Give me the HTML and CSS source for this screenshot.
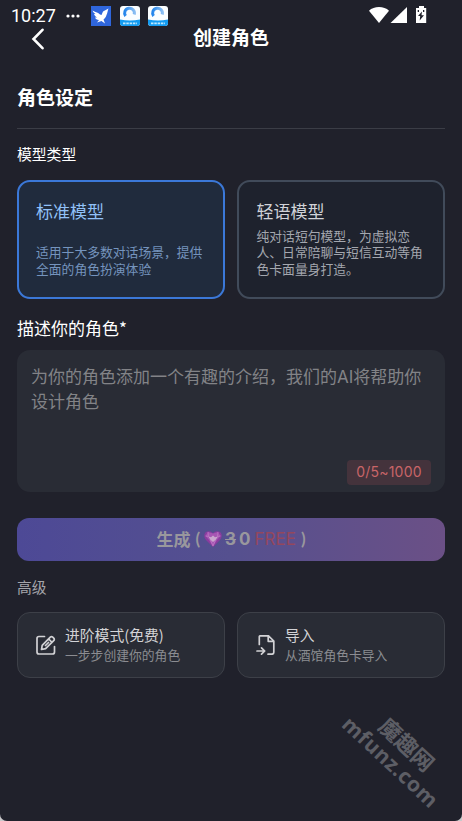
FILE: index.html
```html
<!DOCTYPE html>
<html lang="zh-CN">
<head>
<meta charset="utf-8">
<title>创建角色</title>
<link rel="stylesheet" href="styles.css">
</head>
<body>
<div class="screen">
  <div class="status">
    <span class="time">10:27</span>
    <svg class="dots" width="14" height="4" viewBox="0 0 14 4"><g fill="#fff"><circle cx="2" cy="2" r="1.6"/><circle cx="7" cy="2" r="1.6"/><circle cx="12" cy="2" r="1.6"/></g></svg>
    <svg class="bird" width="20" height="20" viewBox="0 0 20 20"><path fill="#2f66dc" d="M0 0h20v20H0z"/><path fill="#fff" d="M1.500 4.500C4 6 6.500 6 9 8.500L10.500 9 12 5.500 17.500 2.500C16.500 5 16.500 7 15.500 9C15 11.500 13.500 12.500 12.500 13.500L14 17.500 10.500 15 6 16.500 8 14C6 14 4.500 13 4 11.500L6 11.500C4.500 10.500 3.500 9.500 3 8L4.500 8C3 7 2 6 1.500 4.500Z"/></svg>
    <svg class="app" width="20" height="20" viewBox="0 0 20 20"><defs><clipPath id="tile"><rect width="20" height="20" rx="3"/></clipPath><linearGradient id="ring"><stop stop-color="#2586ec"/><stop offset="1" stop-color="#8abdf2"/></linearGradient></defs><g id="app-icon" clip-path="url(#tile)"><path fill="#fafdff" d="M0 0h20v20H0z"/><path d="M5.600 10A4.900 4.900 0 1 1 14.200 8.500" fill="none" stroke="url(#ring)" stroke-width="3"/><path fill="#139cf2" d="M0 13.500Q10 15.500 20 13.500V20H0z"/><path d="M3 17.300h14" stroke="#bde8ff" stroke-width="1.800" stroke-dasharray="2.500 .8"/></g></svg>
    <svg class="app" width="20" height="20" viewBox="0 0 20 20"><use href="#app-icon"/></svg>
    <svg class="signals" width="58" height="18" viewBox="0 0 58 18"><path fill="#fff" d="M0 4.700C5-.2 15-.2 20 4.700L10 17z"/><path fill="#fff" d="M38 1v16H21.500z"/><path fill="#fff" d="M50 0h5v2h2.200v15H47V2h3z"/><path fill="#20212b" d="M53 5.500l-4 4.600h2.200L50.700 14.500l4.300-5.200h-2.500zM48.700 4h1.300v2h-1.300zM54 4h1.300v2H54z"/></svg>
  </div>
  <header class="header">
    <svg class="back" width="14" height="22" viewBox="0 0 14 22"><path d="M11.500 1.800L2.500 11l9 9.200" fill="none" stroke="#fff" stroke-width="2.600" stroke-linecap="round"/></svg>
    <h1>创建角色</h1>
  </header>
  <main>
    <h2>角色设定</h2>
    <h3>模型类型</h3>
    <div class="models">
      <div class="model selected"><strong>标准模型</strong><p>适用于大多数对话场景，提供<br>全面的角色扮演体验</p></div>
      <div class="model"><strong>轻语模型</strong><p>纯对话短句模型，为虚拟恋<br>人、日常陪聊与短信互动等角<br>色卡面量身打造。</p></div>
    </div>
    <h4>描述你的角色*</h4>
    <div class="prompt">
      <p>为你的角色添加一个有趣的介绍，我们的<span class="latin">AI</span>将帮助你<br>设计角色</p>
      <span class="count">0/5~1000</span>
    </div>
    <div class="generate">
      <span>生成</span><span class="paren open">(</span>
      <svg class="gem" width="20" height="18" viewBox="0 0 20 18"><path fill="#8a3c9f" d="M10 3.500C11.500 1 15 .8 17 2C19.500 4 19 7.500 17 10L10 17 3 10C1 7.500.5 4 3 2C5 .8 8.500 1 10 3.500Z"/><path fill="#a656b3" d="M10 3.500L15 2 17.500 6 14 10 10 16.500 6 10 2.500 6 5 2z"/><path fill="#c9a6ce" d="M5.500 6.500L8 7.200 10 5.500l2 1.700 3-.7-2.500 3.500L10 12 7.500 10z"/><path d="M2.500 6l3 .5L5 2M17.500 6l-3 .5L15 2M7.500 10L10 16l2.500-6" fill="none" stroke="#c07bc5" stroke-width=".7"/></svg>
      <span class="old">3</span><span class="zero">0</span><span class="free">FREE</span><span class="paren">)</span>
    </div>
    <h5>高级</h5>
    <div class="actions">
      <div class="action">
        <svg width="20" height="20" viewBox="0 0 20 20" fill="none" stroke="#d2d2d5" stroke-width="1.700" stroke-linecap="round" stroke-linejoin="round"><path d="M8.500 1.500H3Q1 1.500 1 3.500V17Q1 19 3 19H16.500Q18.500 19 18.500 17V11.500"/><path d="M5.500 14.500l.7-4.200L14.300 2.200q1.200-1.200 2.400 0l1 1q1.200 1.200 0 2.400L9.600 13.700zM12.700 4l3.300 3.300M9.500 10.500l3-3"/></svg>
        <div><b>进阶模式(免费)</b><small>一步步创建你的角色</small></div>
      </div>
      <div class="action">
        <svg width="20" height="20" viewBox="0 0 20 20" fill="none" stroke="#d2d2d5" stroke-width="1.700" stroke-linecap="round" stroke-linejoin="round"><path d="M3.300 9.500V1.800Q3.300.8 4.300.8H12.500L17.800 6V17.200Q17.800 19.200 15.800 19.200H12M12.200 1V6.300H17.500M1 16h7M5.500 12.800L8.700 16l-3.200 3.200"/></svg>
        <div><b>导入</b><small>从酒馆角色卡导入</small></div>
      </div>
    </div>
  </main>
  <div class="watermark"><span class="brand">魔趣网</span><span class="site">mfunz.com</span></div>
</div>
</body>
</html>
```
FILE: styles.css
```css
* { box-sizing: border-box; }
body { margin: 0; background: #c9c9cb; font-family: "Noto Sans CJK SC", sans-serif; }
h1, h2, h3, h4, h5, p { margin: 0; }
svg { display: block; flex: none; }
.screen { position: relative; height: 821px; background: #20212b; border-radius: 0 0 7px 7px; overflow: hidden; color: #fff; }
.status { display: flex; align-items: center; height: 26px; padding: 6px 35px 0 11px; }
.time { width: 46px; font: 400 18px/20px Roboto, sans-serif; }
.dots { margin-left: 9px; }
.bird { margin-left: 11px; }
.app { margin-left: 9px; }
.app + .app { margin-left: 8px; }
.signals { margin-left: auto; margin-top: -2px; }
.header { display: flex; align-items: center; height: 26px; }
.back { margin-left: 31px; }
.header h1 { flex: 1; margin: -4px 45px 0 0; text-align: center; font-size: 19px; line-height: 26px; font-weight: 700; }
main { padding: 29px 17px 0; }
h2 { height: 48px; border-bottom: 1px solid #3b3d46; font-size: 19px; line-height: 32px; font-weight: 700; }
h3 { margin-top: 13px; font-size: 14.800px; line-height: 24px; font-weight: 400; }
.models, .actions { display: grid; grid-template-columns: 1fr 1fr; gap: 12px; }
.model { display: flex; flex-direction: column; justify-content: space-between; height: 119px; margin-top: 14px; padding: 16px 0 19px 17.500px; border: 2px solid #414b5a; border-radius: 13px; background: #1e222d; color: #d1d3d8; }
.model strong { font-size: 17px; line-height: 26px; font-weight: 400; }
.model p { font-size: 12.800px; line-height: 16.800px; color: #a4a7af; white-space: nowrap; }
.selected { padding-left: 17px; border-color: #3b78d8; background: #202b3d; color: #91c1f8; }
.selected p { color: #7594be; }
h4 { margin-top: 16px; font-size: 17px; line-height: 26px; font-weight: 400; }
.prompt { display: flex; flex-direction: column; height: 142px; margin-top: 9px; padding: 13px 14px 14px; border-radius: 13px; background: #292c35; }
.prompt p { font-size: 17px; line-height: 25px; color: #828387; white-space: nowrap; }
.latin { font-family: Inter, sans-serif; line-height: 1; }
.count { align-self: flex-end; width: 84px; height: 25px; margin: auto 0 -7px; border-radius: 4px; background: #44333c; color: #c96568; text-align: center; font: 14px/24px Inter, sans-serif; letter-spacing: .2px; }
.generate { display: flex; align-items: center; justify-content: center; height: 43px; margin-top: 26px; padding-bottom: 2px; border-radius: 12px; background: linear-gradient(90deg, #4d4996, #55508f 50%, #6b5086); color: #99979d; font-size: 17px; font-weight: 700; }
.paren { font-family: Lato, sans-serif; font-weight: 700; }
.open { margin: 0 3px 0 5px; }
.old, .zero, .free { font: 700 17px/24px Inter, sans-serif; }
.old { margin-left: 2px; text-decoration: line-through; text-decoration-thickness: 1px; }
.zero { margin: 0 4px 0 3px; }
.free { margin-right: 5px; font-size: 17px; font-weight: 400; color: #94475d; }
h5 { margin-top: 14px; font-size: 14.800px; line-height: 24px; font-weight: 400; color: #a4a5aa; }
.action { display: flex; align-items: center; height: 66px; margin-top: 13px; padding-left: 18px; border: 1px solid #3d4048; border-radius: 13px; background: #292c35; }
.action div { margin: -2px 0 0 9px; }
.action b, .action small { display: block; font-weight: 400; white-space: nowrap; }
.action b { font-size: 14.800px; line-height: 20px; color: #d3d3d6; }
.action small { font-size: 12.800px; line-height: 19px; color: #8b8c91; }
.watermark { position: absolute; left: 329px; top: 728px; width: 140px; transform: rotate(43deg); color: #5d5e65; font-weight: 700; text-align: center; line-height: 25px; }
.brand { display: block; font-size: 22px; }
.site { display: block; font: 700 21px/25px "Open Sans", sans-serif; letter-spacing: .6px; }
```
